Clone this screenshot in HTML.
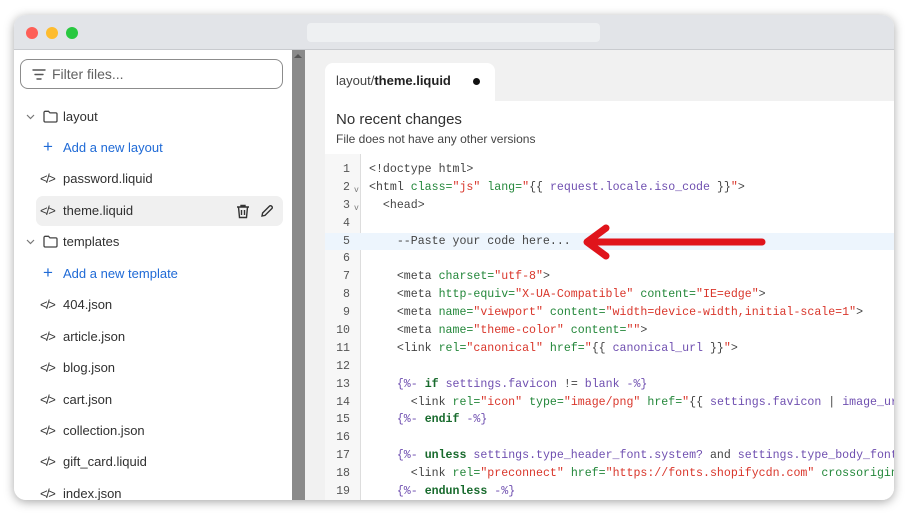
<!DOCTYPE html>
<html><head><style>
*{margin:0;padding:0;box-sizing:border-box}
body{width:906px;height:515px;background:#fff;position:relative;overflow:hidden;font-family:"Liberation Sans",sans-serif}
.win{position:absolute;left:14px;top:15px;width:880px;height:485px;border-radius:12px;overflow:hidden;background:#fff;box-shadow:0 2px 10px rgba(0,0,0,.35)}
.tb{position:absolute;left:0;top:0;width:100%;height:35px;background:#e2e4e8;border-bottom:1px solid #c9cbcf}
.dot{position:absolute;top:12px;width:12px;height:12px;border-radius:50%}
.url{position:absolute;left:293px;top:8px;width:293px;height:19px;background:#eef0f2;border-radius:4px}
.side{position:absolute;left:0;top:35px;width:278px;height:450px;background:#fff}
.sb{position:absolute;left:278px;top:35px;width:13px;height:450px;background:#8a8a8a}
.sb:before{content:"";position:absolute;left:2px;top:4px;border:4px solid transparent;border-bottom:4px solid #555;border-top:0;width:0}
.filter{position:absolute;left:6px;top:9px;width:263px;height:30px;border:1px solid #8c8c8c;border-radius:8px;font-size:14px;color:#616161;padding:6px 0 0 31px}
.it{position:absolute;left:0;font-size:13px;color:#303030;height:20px;line-height:20px}
.it .ic{position:absolute;left:26px;top:0;font-size:13px;color:#3a3a3a;letter-spacing:-1.5px}
.it .t{position:absolute;left:49px;white-space:nowrap}
.add{color:#1f6ad6}
.main{position:absolute;left:291px;top:35px;width:589px;height:450px;background:#f1f1f1}
.tab{position:absolute;left:20px;top:13px;width:170px;height:38px;background:#fff;border-radius:8px 8px 0 0;font-size:13px;color:#444;padding:10px 0 0 11px}
.panel{position:absolute;left:20px;top:51px;width:569px;height:400px;background:#fff}
.h1{position:absolute;left:11px;top:10px;font-size:15px;color:#303030}
.h2{position:absolute;left:11px;top:31px;font-size:12px;color:#444}
.gut{position:absolute;left:0;top:53px;width:36px;height:360px;background:#f7f7f7;border-right:1px solid #ddd}
.code{position:absolute;left:0;top:60px;width:569px;font-family:"Liberation Mono","DejaVu Sans Mono",monospace;font-size:11.6px}
.ln{height:17.9px;line-height:17.9px;position:relative;white-space:pre;color:#444}
.ln .n{position:absolute;left:0;width:25px;text-align:right;color:#555}
.ln .v{position:absolute;left:29px;top:3px;font-size:8px;color:#777}
.ln .c{position:absolute;left:44px}
.g{color:#23873a}.r{color:#d9362b}.p{color:#6f4fb0}.k{color:#176a2c;font-weight:bold}
.hl{background:#edf5fd}
</style></head><body>
<div class="win">
<div class="tb"><div class="dot" style="left:12px;background:#fe5f57"></div><div class="dot" style="left:32px;background:#febc2e"></div><div class="dot" style="left:52px;background:#28c840"></div><div class="url"></div></div>
<div class="side">
<div class="filter"><svg style="position:absolute;left:11px;top:9px" width="14" height="11" viewBox="0 0 14 11"><path d="M1 1h12M3 5.5h8M5 10h4" stroke="#555" stroke-width="1.4" stroke-linecap="round"/></svg>Filter files...</div>
<div class="it" style="top:57px"><svg style="position:absolute;left:12px;top:7px" width="9" height="6"><path d="M1 1l3.5 3.5L8 1" stroke="#777" fill="none" stroke-width="1.2"/></svg><svg style="position:absolute;left:29px;top:3px" width="15" height="13"><path d="M1 2.5a1.2 1.2 0 0 1 1.2-1.2h3.3l1.5 1.6h5.8a1.2 1.2 0 0 1 1.2 1.2v6.7a1.2 1.2 0 0 1-1.2 1.2H2.2A1.2 1.2 0 0 1 1 10.8z" stroke="#444" fill="none" stroke-width="1.3"/></svg><span class="t">layout</span></div>
<div class="it add" style="top:88px"><span style="position:absolute;left:29px;font-size:17px;top:-1px">+</span><span class="t">Add a new layout</span></div>
<div class="it" style="top:119px"><span class="ic">&lt;/&gt;</span><span class="t">password.liquid</span></div>
<div style="position:absolute;left:22px;top:146px;width:247px;height:30px;background:#f0f0f0;border-radius:7px"></div>
<div class="it" style="top:151px"><span class="ic">&lt;/&gt;</span><span class="t">theme.liquid</span>
<svg style="position:absolute;left:222px;top:3px" width="14" height="15"><path d="M1 3h12M5 3V1.5h4V3M2.5 3l1 10.5h7l1-10.5M5.5 6v5M8.5 6v5" stroke="#333" fill="none" stroke-width="1.4"/></svg>
<svg style="position:absolute;left:246px;top:3px" width="14" height="14"><path d="M2 12l.6-3L9.5 2.1a1.4 1.4 0 0 1 2 0l.4.4a1.4 1.4 0 0 1 0 2L5 11.4z" stroke="#333" fill="none" stroke-width="1.4"/></svg></div>
<div class="it" style="top:182px"><svg style="position:absolute;left:12px;top:7px" width="9" height="6"><path d="M1 1l3.5 3.5L8 1" stroke="#777" fill="none" stroke-width="1.2"/></svg><svg style="position:absolute;left:29px;top:3px" width="15" height="13"><path d="M1 2.5a1.2 1.2 0 0 1 1.2-1.2h3.3l1.5 1.6h5.8a1.2 1.2 0 0 1 1.2 1.2v6.7a1.2 1.2 0 0 1-1.2 1.2H2.2A1.2 1.2 0 0 1 1 10.8z" stroke="#444" fill="none" stroke-width="1.3"/></svg><span class="t">templates</span></div>
<div class="it add" style="top:214px"><span style="position:absolute;left:29px;font-size:17px;top:-1px">+</span><span class="t">Add a new template</span></div>
<div class="it" style="top:245px"><span class="ic">&lt;/&gt;</span><span class="t">404.json</span></div>
<div class="it" style="top:277px"><span class="ic">&lt;/&gt;</span><span class="t">article.json</span></div>
<div class="it" style="top:308px"><span class="ic">&lt;/&gt;</span><span class="t">blog.json</span></div>
<div class="it" style="top:340px"><span class="ic">&lt;/&gt;</span><span class="t">cart.json</span></div>
<div class="it" style="top:371px"><span class="ic">&lt;/&gt;</span><span class="t">collection.json</span></div>
<div class="it" style="top:402px"><span class="ic">&lt;/&gt;</span><span class="t">gift_card.liquid</span></div>
<div class="it" style="top:434px"><span class="ic">&lt;/&gt;</span><span class="t">index.json</span></div>
</div>
<div class="sb"></div>
<div class="main">
<div class="tab">layout/<b style="color:#222;font-weight:bold">theme.liquid</b><span style="position:absolute;left:148px;top:15px;width:7px;height:7px;border-radius:50%;background:#111"></span></div>
<div class="panel">
<div class="h1">No recent changes</div>
<div class="h2">File does not have any other versions</div>
<div class="gut"></div>
<div class="code">
<div class="ln"><span class="n">1</span><span class="c">&lt;!doctype html&gt;</span></div>
<div class="ln"><span class="n">2</span><span class="v">v</span><span class="c">&lt;html <span class="g">class=</span><span class="r">"js"</span> <span class="g">lang=</span><span class="r">"</span>{{ <span class="p">request.locale.iso_code</span> }}<span class="r">"</span>&gt;</span></div>
<div class="ln"><span class="n">3</span><span class="v">v</span><span class="c">  &lt;head&gt;</span></div>
<div class="ln"><span class="n">4</span></div>
<div class="ln hl"><span class="n">5</span><span class="c">    --Paste your code here...</span></div>
<div class="ln"><span class="n">6</span></div>
<div class="ln"><span class="n">7</span><span class="c">    &lt;meta <span class="g">charset=</span><span class="r">"utf-8"</span>&gt;</span></div>
<div class="ln"><span class="n">8</span><span class="c">    &lt;meta <span class="g">http-equiv=</span><span class="r">"X-UA-Compatible"</span> <span class="g">content=</span><span class="r">"IE=edge"</span>&gt;</span></div>
<div class="ln"><span class="n">9</span><span class="c">    &lt;meta <span class="g">name=</span><span class="r">"viewport"</span> <span class="g">content=</span><span class="r">"width=device-width,initial-scale=1"</span>&gt;</span></div>
<div class="ln"><span class="n">10</span><span class="c">    &lt;meta <span class="g">name=</span><span class="r">"theme-color"</span> <span class="g">content=</span><span class="r">""</span>&gt;</span></div>
<div class="ln"><span class="n">11</span><span class="c">    &lt;link <span class="g">rel=</span><span class="r">"canonical"</span> <span class="g">href=</span><span class="r">"</span>{{ <span class="p">canonical_url</span> }}<span class="r">"</span>&gt;</span></div>
<div class="ln"><span class="n">12</span></div>
<div class="ln"><span class="n">13</span><span class="c">    <span class="p">{%-</span> <span class="k">if</span> <span class="p">settings.favicon</span> != <span class="p">blank -%}</span></span></div>
<div class="ln"><span class="n">14</span><span class="c">      &lt;link <span class="g">rel=</span><span class="r">"icon"</span> <span class="g">type=</span><span class="r">"image/png"</span> <span class="g">href=</span><span class="r">"</span>{{ <span class="p">settings.favicon</span> | <span class="p">image_url</span></span></div>
<div class="ln"><span class="n">15</span><span class="c">    <span class="p">{%-</span> <span class="k">endif</span> <span class="p">-%}</span></span></div>
<div class="ln"><span class="n">16</span></div>
<div class="ln"><span class="n">17</span><span class="c">    <span class="p">{%-</span> <span class="k">unless</span> <span class="p">settings.type_header_font.system?</span> and <span class="p">settings.type_body_font</span></span></div>
<div class="ln"><span class="n">18</span><span class="c">      &lt;link <span class="g">rel=</span><span class="r">"preconnect"</span> <span class="g">href=</span><span class="r">"https://fonts.shopifycdn.com"</span> <span class="g">crossorigin</span></span></div>
<div class="ln"><span class="n">19</span><span class="c">    <span class="p">{%-</span> <span class="k">endunless</span> <span class="p">-%}</span></span></div>
</div>
</div>
</div>
</div>
<svg style="position:absolute;left:580px;top:224px" width="190" height="36"><path d="M8 18L182 18" stroke="#e0141b" stroke-width="7" stroke-linecap="round"/><path d="M26 4L7 18L26 32" stroke="#e0141b" stroke-width="7" fill="none" stroke-linecap="round" stroke-linejoin="round"/></svg>
</body></html>
